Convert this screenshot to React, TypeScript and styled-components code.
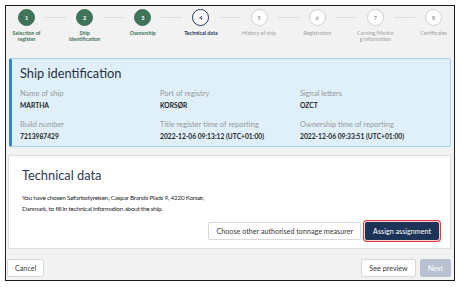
import { Fragment } from "react";
import styled, { createGlobalStyle } from "styled-components";

const GlobalStyle = createGlobalStyle`
    body {
        margin: 0;
        background: #ffffff;
        font-family: "Lato", "Noto Sans", sans-serif;
    }
`;

const Frame = styled.div`
    margin: 5px;
    width: 448px;
    height: 274px;
    border: 1px solid #1c1c1c;
    background: #f2f2f2;
    display: flex;
    flex-direction: column;
    overflow: hidden;
`;

const Stepper = styled.div`
    display: flex;
    align-items: flex-start;
    padding: 3px 12px 0 12px;
    height: 50px;
    box-sizing: border-box;
    flex: none;
`;

const Step = styled.div`
    width: 17px;
    flex: none;
    display: flex;
    flex-direction: column;
    align-items: center;
`;

type StepState = "done" | "current" | "todo";

const Circle = styled.div<{ $state: StepState }>`
    width: 17px;
    height: 17px;
    box-sizing: border-box;
    border-radius: 50%;
    display: flex;
    align-items: center;
    justify-content: center;
    font-size: 5.5px;
    font-weight: 700;
    background: ${(p) => (p.$state === "done" ? "#3f735a" : "#ffffff")};
    color: ${(p) =>
        p.$state === "done" ? "#ffffff" : p.$state === "current" ? "#1d3458" : "#9a9a9a"};
    border: 1px solid
        ${(p) =>
            p.$state === "done" ? "#3f735a" : p.$state === "current" ? "#1d3458" : "#cfcfcf"};
`;

const StepLabel = styled.div<{ $state: StepState }>`
    margin-top: 4px;
    width: 42px;
    flex: none;
    text-align: center;
    font-size: 5.3px;
    line-height: 6px;
    font-weight: ${(p) => (p.$state === "todo" ? 400 : 700)};
    color: ${(p) =>
        p.$state === "done" ? "#3f735a" : p.$state === "current" ? "#1d3458" : "#a0a0a0"};
`;

const Connector = styled.div`
    flex: 1;
    height: 1px;
    margin: 8px 10px 0 10px;
    background: #dcdcdc;
`;

const Body = styled.div`
    padding: 2px 3px 0 2px;
    display: flex;
    flex-direction: column;
    gap: 8px;
`;

const InfoCard = styled.div`
    margin-left: 1px;
    background: #e0f0fa;
    border: 1px solid #a8d2ee;
    border-left: 3px solid #2d88c9;
    border-radius: 2px;
    padding: 5px 8px 5px 8px;
`;

const CardTitle = styled.h2`
    margin: 0 0 7px 0;
    font-size: 12.8px;
    font-weight: 400;
    color: #26313f;
    line-height: 18px;
`;

const InfoGrid = styled.div`
    display: grid;
    grid-template-columns: 140px 140px 140px;
    row-gap: 10px;
`;

const Field = styled.div`
    display: flex;
    flex-direction: column;
    gap: 1px;
`;

const FieldLabel = styled.div`
    font-size: 7.5px;
    line-height: 10px;
    color: #979797;
`;

const FieldValue = styled.div`
    font-size: 6.7px;
    line-height: 10px;
    font-weight: 700;
    color: #1e1e1e;
`;

const TaskCard = styled.div`
    background: #ffffff;
    border: 1px solid #dedede;
    padding: 9px 11px 8px 13px;
`;

const TaskTitle = styled.h2`
    margin: 0 0 8px 0;
    font-size: 12.8px;
    font-weight: 400;
    color: #2b3a4e;
    line-height: 20px;
`;

const Paragraph = styled.p`
    margin: 0 0 8px 0;
    font-size: 6.5px;
    letter-spacing: -0.28px;
    line-height: 10.5px;
    color: #2a2a2a;
`;

const ButtonRow = styled.div<{ $split?: boolean }>`
    display: flex;
    justify-content: ${(p) => (p.$split ? "space-between" : "flex-end")};
    gap: 4px;
`;

const Button = styled.button<{ $variant?: "primary" | "disabled" }>`
    height: 18px;
    padding: 0 7px;
    font-family: inherit;
    font-size: 7.2px;
    border-radius: 2px;
    cursor: pointer;
    border: 1px solid
        ${(p) =>
            p.$variant === "primary" ? "#1d3458" : p.$variant === "disabled" ? "#b8c1cd" : "#d9d9d9"};
    background: ${(p) =>
        p.$variant === "primary" ? "#1d3458" : p.$variant === "disabled" ? "#b8c1cd" : "#ffffff"};
    color: ${(p) => (p.$variant ? "#ffffff" : "#3a3a3a")};
    box-shadow: ${(p) =>
        p.$variant === "primary" ? "0 0 0 1px #f6d0d0, 0 0 0 2px #e23a3f" : "none"};
`;

const Footer = styled.div`
    margin-top: auto;
    padding: 0 3px 3px 1px;
`;

const steps: { label: React.ReactNode; state: StepState }[] = [
    { label: "Selection of register", state: "done" },
    { label: "Ship identification", state: "done" },
    { label: "Ownership", state: "done" },
    { label: "Technical data", state: "current" },
    { label: "History of ship", state: "todo" },
    { label: "Registration", state: "todo" },
    {
        label: (
            <>
                Carving/Markin
                <br />g information
            </>
        ),
        state: "todo",
    },
    { label: "Certificates", state: "todo" },
];

const shipFields = [
    { label: "Name of ship", value: "MARTHA" },
    { label: "Port of registry", value: "KORSØR" },
    { label: "Signal letters", value: "OZCT" },
    { label: "Build number", value: "7213987429" },
    { label: "Title register time of reporting", value: "2022-12-06 09:13:12 (UTC+01:00)" },
    { label: "Ownership time of reporting", value: "2022-12-06 09:33:51 (UTC+01:00)" },
];

export default function App() {
    return (
        <>
            <GlobalStyle />
            <Frame>
                <Stepper>
                    {steps.map((s, i) => (
                        <Fragment key={i}>
                            {i > 0 && <Connector />}
                            <Step>
                                <Circle $state={s.state}>{i + 1}</Circle>
                                <StepLabel $state={s.state}>{s.label}</StepLabel>
                            </Step>
                        </Fragment>
                    ))}
                </Stepper>
                <Body>
                    <InfoCard>
                        <CardTitle>Ship identification</CardTitle>
                        <InfoGrid>
                            {shipFields.map((f) => (
                                <Field key={f.label}>
                                    <FieldLabel>{f.label}</FieldLabel>
                                    <FieldValue>{f.value}</FieldValue>
                                </Field>
                            ))}
                        </InfoGrid>
                    </InfoCard>
                    <TaskCard>
                        <TaskTitle>Technical data</TaskTitle>
                        <Paragraph>
                            You have chosen Søfartsstyrelsen, Caspar Brands Plads 9, 4220 Korsør,
                            <br />
                            Danmark, to fill in technical information about the ship.
                        </Paragraph>
                        <ButtonRow>
                            <Button>Choose other authorised tonnage measurer</Button>
                            <Button $variant="primary">Assign assignment</Button>
                        </ButtonRow>
                    </TaskCard>
                </Body>
                <Footer>
                    <ButtonRow $split>
                        <Button>Cancel</Button>
                        <ButtonRow>
                            <Button>See preview</Button>
                            <Button $variant="disabled">Next</Button>
                        </ButtonRow>
                    </ButtonRow>
                </Footer>
            </Frame>
        </>
    );
}
